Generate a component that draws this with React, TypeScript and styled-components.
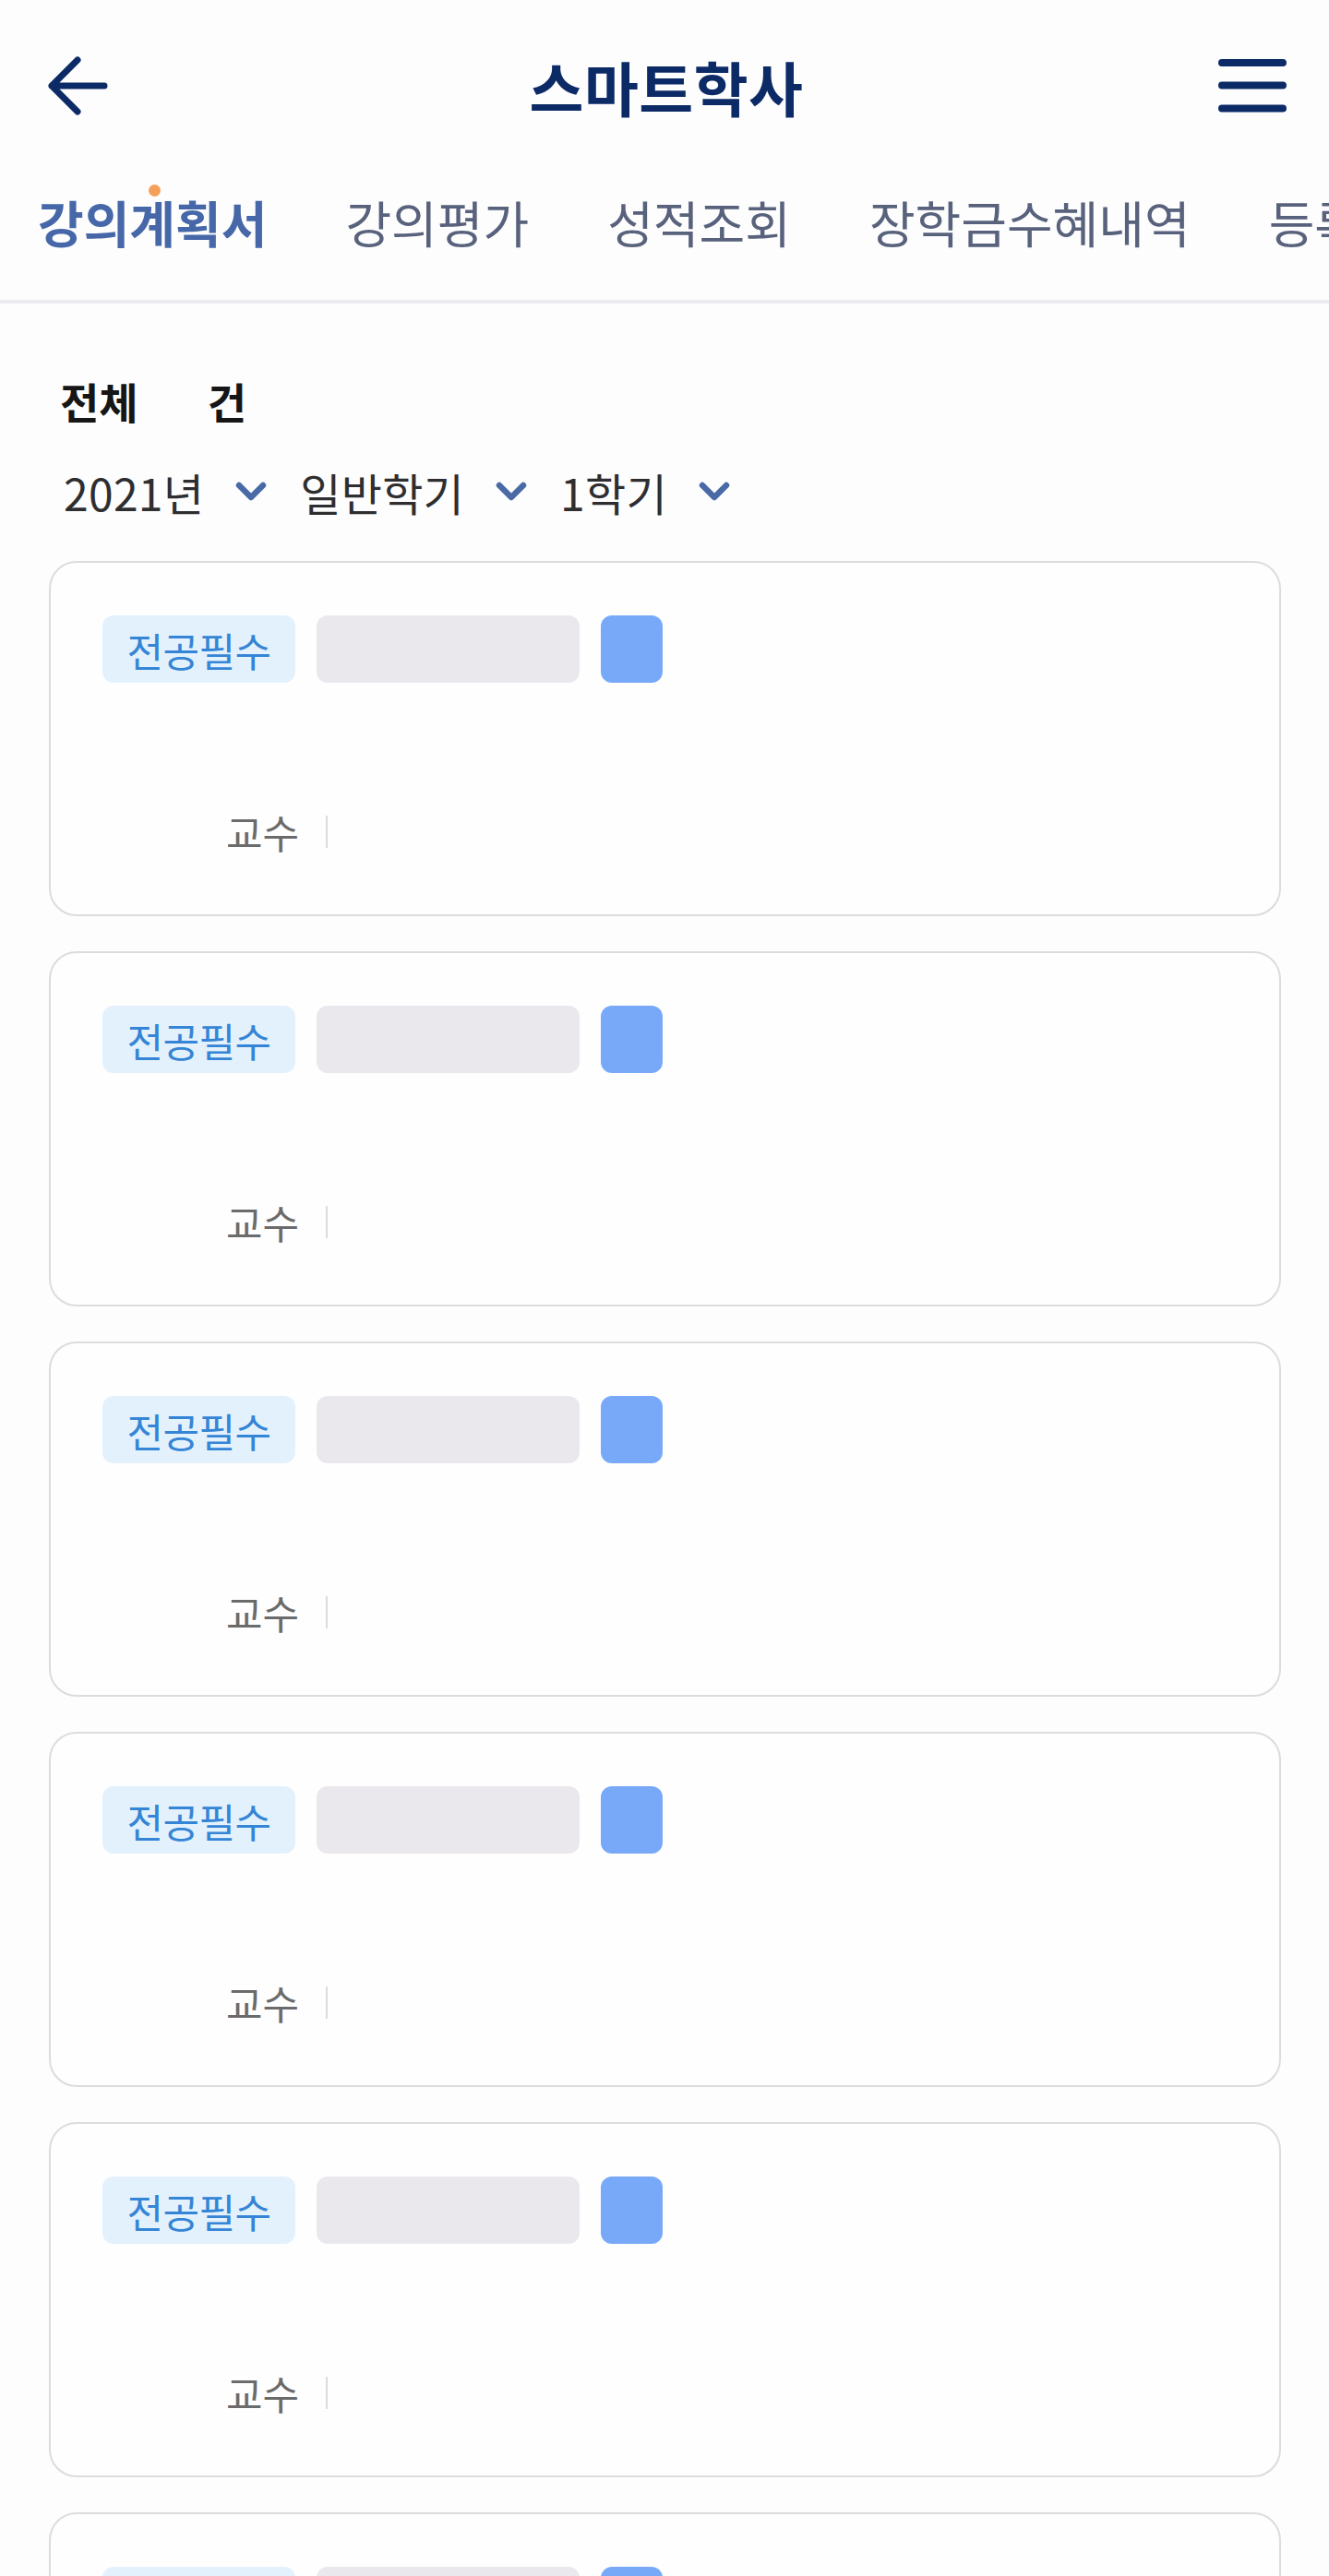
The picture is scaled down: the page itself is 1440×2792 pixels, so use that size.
import styled, { createGlobalStyle } from "styled-components";

const GlobalStyle = createGlobalStyle`
  html, body {
    margin: 0;
    padding: 0;
    background: #fdfdfe;
    overflow: hidden;
  }
  body {
    font-family: "Noto Sans CJK KR", "Noto Sans", sans-serif;
  }
`;

const Page = styled.main`
  height: 2792px;
  overflow: hidden;
`;

const Header = styled.header`
  display: grid;
  grid-template-columns: 1fr auto 1fr;
  align-items: center;
  height: 186px;
  padding: 0 46px 0 50px;
  box-sizing: border-box;
`;

const IconButton = styled.button<{ $align: "start" | "end" }>`
  justify-self: ${(p) => p.$align};
  background: none;
  border: 0;
  padding: 0;
  display: flex;
  cursor: pointer;
`;

const Title = styled.h1`
  margin: 0;
  font-size: 64px;
  line-height: 64px;
  font-weight: 700;
  letter-spacing: 0.5px;
  color: #0c2b66;
`;

const TabBar = styled.nav`
  display: flex;
  gap: 85px;
  padding: 28px 0 57px 41px;
  border-bottom: 4px solid #ececf0;
  white-space: nowrap;
  overflow: hidden;
`;

const Tab = styled.span<{ $active?: boolean }>`
  position: relative;
  font-size: 54px;
  line-height: 54px;
  letter-spacing: 0;
  font-weight: ${(p) => (p.$active ? 700 : 400)};
  color: ${(p) => (p.$active ? "#4668a8" : "#59627c")};
`;

const Dot = styled.i`
  position: absolute;
  left: 120px;
  top: -14px;
  width: 13px;
  height: 13px;
  border-radius: 50%;
  background: #f5a05a;
`;

const Content = styled.section`
  padding: 82px 52px 0 53px;
`;

const Summary = styled.div`
  display: flex;
  gap: 75px;
  padding-left: 12px;
  font-size: 46px;
  line-height: 46px;
  font-weight: 700;
  letter-spacing: 0;
  color: #161616;
`;

const Filters = styled.div`
  display: flex;
  align-items: center;
  gap: 36px;
  margin-top: 52px;
  padding-left: 16px;
`;

const Filter = styled.div`
  display: flex;
  align-items: center;
  gap: 34px;
  font-size: 48px;
  line-height: 48px;
  letter-spacing: 0.3px;
  color: #2e2e30;
`;

const CardList = styled.div`
  display: flex;
  flex-direction: column;
  gap: 38px;
  margin-top: 51px;
`;

const Card = styled.article`
  box-sizing: border-box;
  height: 385px;
  border: 2px solid #dcdcdf;
  border-radius: 30px;
  background: #fefeff;
  padding: 57px 56px 0;
`;

const TagRow = styled.div`
  display: flex;
  gap: 23px;
`;

const Chip = styled.span<{ $w: number; $bg: string }>`
  box-sizing: border-box;
  display: flex;
  align-items: center;
  justify-content: center;
  width: ${(p) => p.$w}px;
  height: 73px;
  border-radius: 12px;
  background: ${(p) => p.$bg};
  font-size: 43px;
  letter-spacing: -0.5px;
  color: #3585d6;
`;

const ProfRow = styled.div`
  display: flex;
  align-items: center;
  margin-top: 140px;
  padding-left: 134px;
  font-size: 43px;
  line-height: 43px;
  letter-spacing: 0;
  color: #6b6b6b;
`;

const Sep = styled.span`
  width: 2px;
  height: 35px;
  margin-left: 29px;
  background: #dcdcdc;
`;

const Chevron = () => (
  <svg width="34" height="22" viewBox="0 0 34 22">
    <path d="M4 4 L17 17 L30 4" fill="none" stroke="#4a6aa6" strokeWidth="6.5" strokeLinecap="round" strokeLinejoin="round" />
  </svg>
);

const tabs = ["강의계획서", "강의평가", "성적조회", "장학금수혜내역", "등록금납부"];
const filters = ["2021년", "일반학기", "1학기"];

export default function App() {
  return (
    <Page>
      <GlobalStyle />
      <Header>
        <IconButton $align="start" aria-label="뒤로">
          <svg width="68" height="66" viewBox="0 0 68 66">
            <path d="M63 33 H6 M34 5 L6 33 L34 61" fill="none" stroke="#0c2b66" strokeWidth="7" strokeLinecap="round" strokeLinejoin="round" />
          </svg>
        </IconButton>
        <Title>스마트학사</Title>
        <IconButton $align="end" aria-label="메뉴">
          <svg width="74" height="60" viewBox="0 0 74 60">
            <path d="M4 5 H70 M4 29.5 H70 M4 54.5 H70" fill="none" stroke="#0c2b66" strokeWidth="8" strokeLinecap="round" />
          </svg>
        </IconButton>
      </Header>

      <TabBar>
        {tabs.map((t, i) => (
          <Tab key={t} $active={i === 0}>
            {i === 0 && <Dot />}
            {t}
          </Tab>
        ))}
      </TabBar>

      <Content>
        <Summary>
          <span>전체</span>
          <span>건</span>
        </Summary>
        <Filters>
          {filters.map((f) => (
            <Filter key={f}>
              {f}
              <Chevron />
            </Filter>
          ))}
        </Filters>

        <CardList>
          {Array.from({ length: 6 }).map((_, i) => (
            <Card key={i}>
              <TagRow>
                <Chip $w={209} $bg="#e3f1fd">전공필수</Chip>
                <Chip $w={285} $bg="#eae8ec" />
                <Chip $w={67} $bg="#78a9f9" />
              </TagRow>
              <ProfRow>
                교수
                <Sep />
              </ProfRow>
            </Card>
          ))}
        </CardList>
      </Content>
    </Page>
  );
}
